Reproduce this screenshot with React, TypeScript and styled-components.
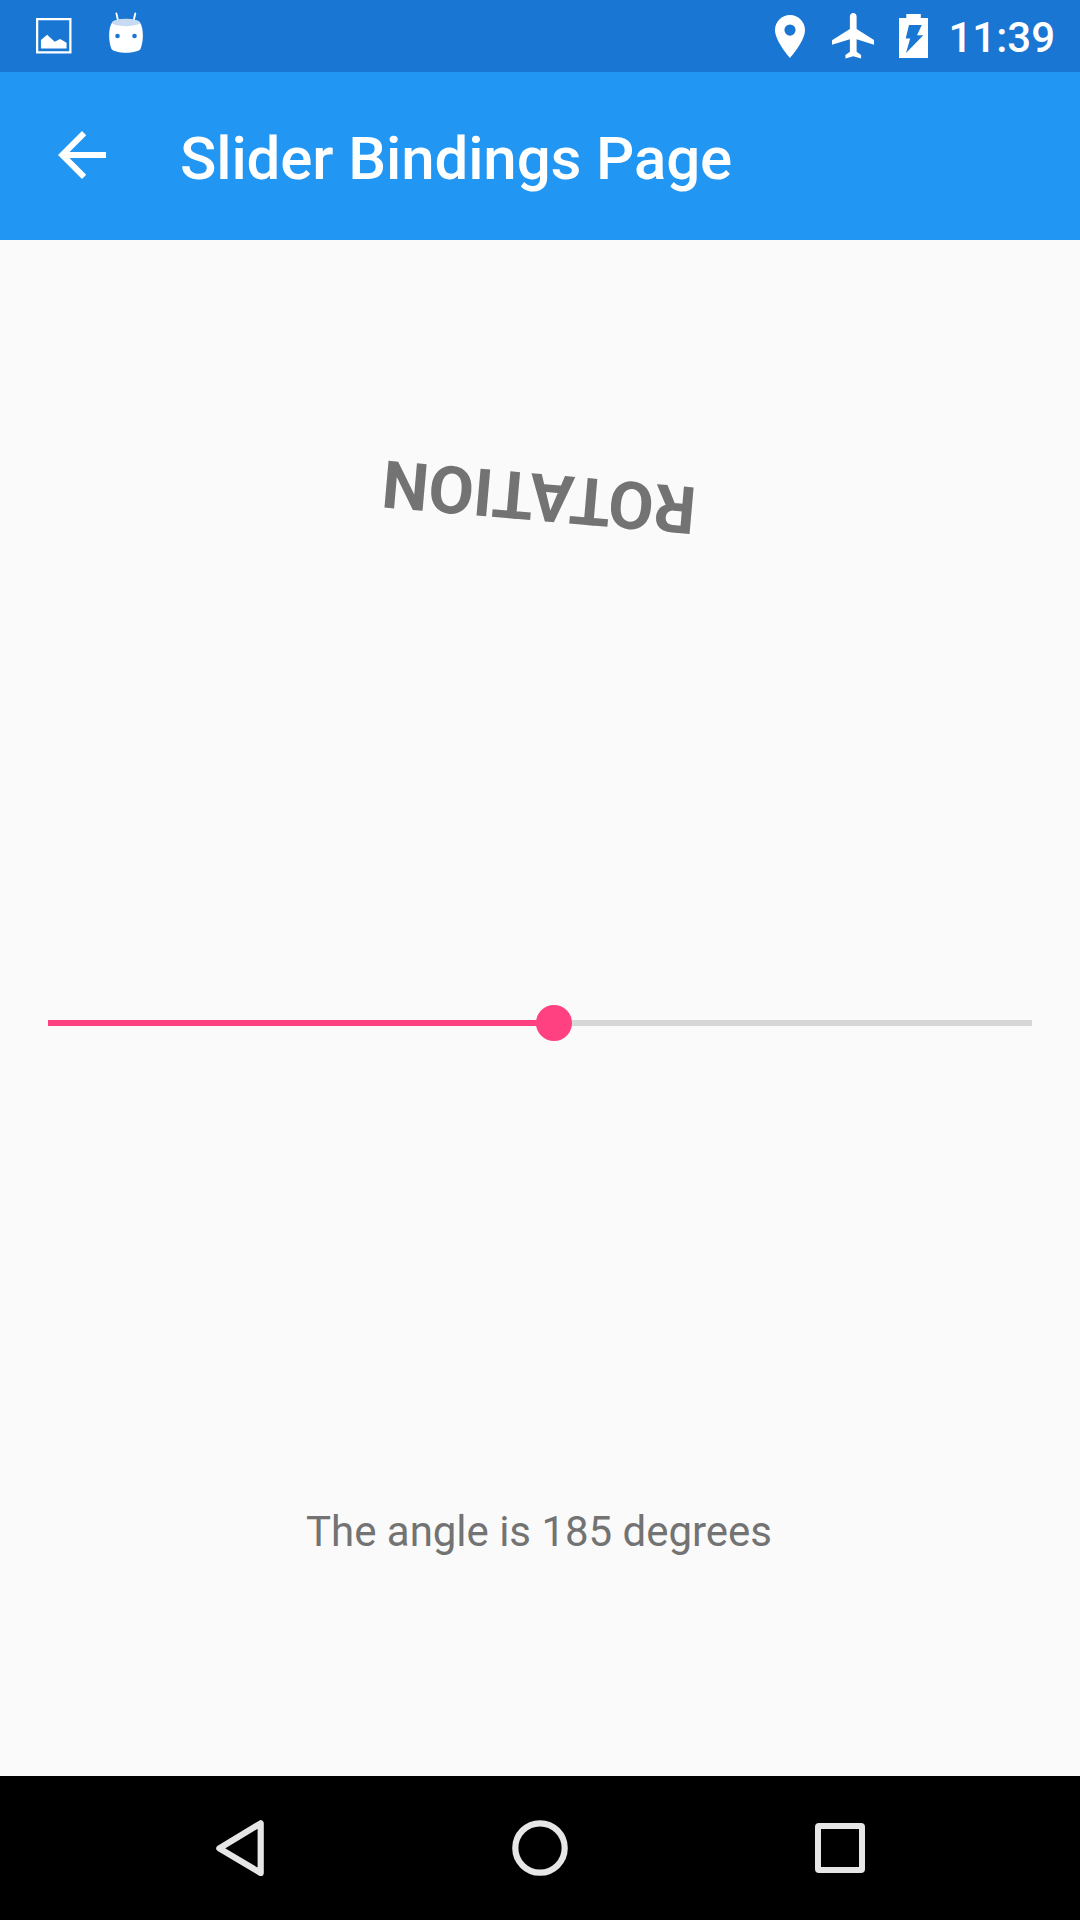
import React, { useRef, useState } from "react";
import styled, { createGlobalStyle } from "styled-components";

const GlobalStyle = createGlobalStyle`
  html, body { margin: 0; padding: 0; background: #fafafa; }
  * { box-sizing: border-box; }
`;

const Screen = styled.div`
  display: flex;
  flex-direction: column;
  width: 1080px;
  height: 1920px;
  overflow: hidden;
  background: #fafafa;
  font-family: Roboto, "Noto Sans", sans-serif;
`;

const StatusBar = styled.header`
  display: flex;
  flex: none;
  justify-content: space-between;
  height: 72px;
  padding: 0 25px 0 36px;
  background: #1976d2;
  color: #fff;
`;

const StatusGroup = styled.div`
  display: flex;
  align-items: flex-start;
`;

const Glyph = styled.svg<{ $top: number; $gap?: number }>`
  display: block;
  flex: none;
  margin-top: ${(p) => p.$top}px;
  margin-right: ${(p) => p.$gap ?? 0}px;
  fill: currentColor;
`;

const Clock = styled.time`
  font-size: 42px;
  font-weight: 500;
  line-height: 48px;
  margin-top: 14px;
`;

const AppBar = styled.div`
  display: flex;
  flex: none;
  align-items: center;
  height: 168px;
  padding: 0 46px;
  background: #2196f3;
  color: #fff;
`;

const BackButton = styled.button`
  width: 72px;
  height: 72px;
  margin: 0 62px 2px 0;
  padding: 0;
  border: 0;
  background: none;
  color: inherit;
`;

const Title = styled.h1`
  margin: 5px 0 0;
  font-size: 60px;
  font-weight: 500;
  line-height: 72px;
  letter-spacing: -0.11px;
  white-space: nowrap;
`;

const Content = styled.main`
  display: grid;
  flex: 1;
  grid-template-rows: repeat(3, 1fr);
`;

const Cell = styled.section`
  display: flex;
  align-items: center;
  justify-content: center;
  padding: 0 48px;
`;

const RotatedLabel = styled.div`
  margin-right: 1px;
  font-size: 66px;
  font-weight: 700;
  line-height: 78px;
  letter-spacing: -0.18px;
  color: #737373;
`;

const AngleLabel = styled.div`
  margin: 24px 2px 0 0;
  font-size: 42px;
  line-height: 50px;
  letter-spacing: -0.03px;
  color: #737373;
`;

const Slider = styled.div`
  display: flex;
  align-items: center;
  width: 100%;
  height: 96px;
  margin-bottom: -30px;
  touch-action: none;
`;

const Filled = styled.div`
  flex: none;
  height: 6px;
  background: #ff4081;
`;

const Remaining = styled.div`
  flex: 1;
  height: 6px;
  background: #d6d6d6;
`;

const Thumb = styled.div`
  flex: none;
  width: 36px;
  height: 36px;
  margin: 0 -18px;
  border-radius: 50%;
  background: #ff4081;
  z-index: 1;
`;

const NavBar = styled.nav`
  display: flex;
  flex: none;
  justify-content: center;
  gap: 156px;
  height: 144px;
  background: #000;
  color: #e6e6e6;
`;

const NavButton = styled.button`
  width: 144px;
  height: 144px;
  padding: 0;
  border: 0;
  background: none;
  color: inherit;

  svg {
    display: block;
    fill: none;
    stroke: currentColor;
    stroke-width: 6.2;
    stroke-linejoin: round;
  }
`;

export default function App() {
  const [angle, setAngle] = useState(185);
  const track = useRef<HTMLDivElement>(null);

  const drag = (e: React.PointerEvent) => {
    if (!e.buttons || !track.current) return;
    const box = track.current.getBoundingClientRect();
    const part = Math.min(1, Math.max(0, (e.clientX - box.left) / box.width));
    setAngle(Math.round(part * 360));
  };

  return (
    <Screen>
      <GlobalStyle />
      <StatusBar>
        <StatusGroup>
          <Glyph width="35.5" height="35.5" viewBox="0 0 36 36" $top={18} $gap={37.5}>
            <path d="M0 0H36V36H0ZM2.3 2.3V33.7H33.7V2.3Z" fillRule="evenodd" />
            <path d="M5 31V22.3L11.3 17L19 24L24.5 21.2L31 25V31Z" />
          </Glyph>
          <Glyph width="34" height="41" viewBox="0 0 34 41" $top={12}>
            <path d="M7.4 1.5L9.3 9.5M26.3 1.5L24.4 9.5" stroke="currentColor" strokeWidth="1.9" strokeLinecap="round" />
            <path
              d="M3 10.5C8 6 26 6 31 10.5C34.7 16 34.8 29 31.5 37C27 42 7 42 2.5 37C-.8 29-.7 16 3 10.5ZM8.5 21.7a2.3 2.3 0 1 0 0 4.6a2.3 2.3 0 1 0 0-4.6ZM25.5 21.7a2.3 2.3 0 1 0 0 4.6a2.3 2.3 0 1 0 0-4.6Z"
              fillRule="evenodd"
            />
            <ellipse cx="17" cy="10.5" rx="14" ry="3.7" fill="#c6dbf3" />
          </Glyph>
        </StatusGroup>
        <StatusGroup>
          <Glyph width="30" height="43" viewBox="5 2 14 20" preserveAspectRatio="none" $top={15} $gap={27}>
            <path d="M12 2C8.13 2 5 5.13 5 9c0 5.25 7 13 7 13s7-7.75 7-13c0-3.87-3.13-7-7-7zm0 9.6a2.6 2.6 0 1 1 0-5.2 2.6 2.6 0 0 1 0 5.2z" />
          </Glyph>
          <Glyph width="42.5" height="45.5" viewBox="2 2 19 20" preserveAspectRatio="none" $top={13} $gap={25}>
            <path d="M21 16v-2l-8-5V3.5c0-.83-.67-1.5-1.5-1.5S10 2.67 10 3.5V9l-8 5v2l8-2.5V19l-2 1.5V22l3.5-1 3.5 1v-1.5L13 19v-5.5l8 2.5z" />
          </Glyph>
          <Glyph width="29" height="44" viewBox="0 0 29 44" $top={14} $gap={20.3}>
            <path
              d="M7.3 0H21.8V4H29V44H0V4H7.3ZM10 11L6.7 24.5H11.2L7 39L24.3 21.3H18L22.8 11Z"
              fillRule="evenodd"
            />
          </Glyph>
          <Clock>11:39</Clock>
        </StatusGroup>
      </StatusBar>

      <AppBar>
        <BackButton aria-label="Back">
          <svg width="72" height="72" viewBox="0 0 24 24" fill="currentColor" display="block">
            <path d="M20 11H7.83l5.59-5.59L12 4l-8 8 8 8 1.41-1.41L7.83 13H20v-2z" />
          </svg>
        </BackButton>
        <Title>Slider Bindings Page</Title>
      </AppBar>

      <Content>
        <Cell>
          <RotatedLabel style={{ transform: `rotate(${angle}deg)` }}>ROTATION</RotatedLabel>
        </Cell>
        <Cell>
          <Slider ref={track} onPointerDown={drag} onPointerMove={drag}>
            <Filled style={{ width: `${(angle / 360) * 100}%` }} />
            <Thumb />
            <Remaining />
          </Slider>
        </Cell>
        <Cell>
          <AngleLabel>The angle is {angle} degrees</AngleLabel>
        </Cell>
      </Content>

      <NavBar>
        <NavButton aria-label="Back">
          <svg width="144" height="144" viewBox="0 0 144 144">
            <path d="M92.7 47.3V97L51.3 72.3Z" />
          </svg>
        </NavButton>
        <NavButton aria-label="Home">
          <svg width="144" height="144" viewBox="0 0 144 144">
            <circle cx="72" cy="72" r="24.7" />
          </svg>
        </NavButton>
        <NavButton aria-label="Recents">
          <svg width="144" height="144" viewBox="0 0 144 144">
            <path d="M51 47H93Q97 47 97 51V93Q97 97 93 97H51Q47 97 47 93V51Q47 47 51 47ZM53 53V91H91V53Z" fill="currentColor" fillRule="evenodd" stroke="none" />
          </svg>
        </NavButton>
      </NavBar>
    </Screen>
  );
}
